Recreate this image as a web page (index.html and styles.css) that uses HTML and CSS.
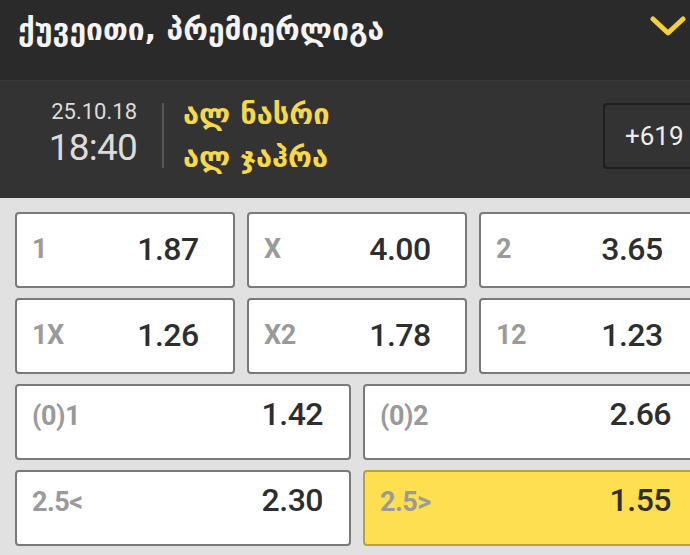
FILE: index.html
```html
<!DOCTYPE html>
<html lang="ka">
<head>
<meta charset="utf-8">
<title>ქუვეითი, პრემიერლიგა</title>
<link rel="stylesheet" href="styles.css">
</head>
<body>
<div class="page">
  <header class="header">
    <h1 class="title">ქუვეითი, პრემიერლიგა</h1>
    <svg class="chevron" width="36" height="22" viewBox="0 0 36 22" aria-hidden="true">
      <polyline points="3,3 18,17 33,3" fill="none" stroke="#f4d03c" stroke-width="5" stroke-linecap="round" stroke-linejoin="round"/>
    </svg>
  </header>

  <section class="match">
    <div class="when">
      <div class="date">25.10.18</div>
      <div class="time">18:40</div>
    </div>
    <div class="divider"></div>
    <div class="teams">
      <div class="team">ალ ნასრი</div>
      <div class="team">ალ ჯაჰრა</div>
    </div>
    <div class="more">+619</div>
  </section>

  <section class="odds">
    <div class="grid grid3">
      <div class="cell"><span class="label">1</span><span class="value">1.87</span></div>
      <div class="cell"><span class="label">X</span><span class="value">4.00</span></div>
      <div class="cell"><span class="label">2</span><span class="value">3.65</span></div>
      <div class="cell"><span class="label">1X</span><span class="value">1.26</span></div>
      <div class="cell"><span class="label">X2</span><span class="value">1.78</span></div>
      <div class="cell"><span class="label">12</span><span class="value">1.23</span></div>
    </div>
    <div class="grid grid2">
      <div class="cell"><span class="label">(0)1</span><span class="value">1.42</span></div>
      <div class="cell"><span class="label">(0)2</span><span class="value">2.66</span></div>
      <div class="cell"><span class="label">2.5&lt;</span><span class="value">2.30</span></div>
      <div class="cell selected"><span class="label">2.5&gt;</span><span class="value">1.55</span></div>
    </div>
  </section>
</div>
</body>
</html>
```

FILE: styles.css
```css
html, body {
  margin: 0;
  padding: 0;
  background: #e1e1e1;
}

.page {
  width: 690px;
  height: 555px;
  overflow: hidden;
  font-family: Roboto, "DejaVu Sans", sans-serif;
}

.header {
  box-sizing: border-box;
  height: 81px;
  background: #2a2a2a;
  border-bottom: 1px solid #3a3a3a;
  display: flex;
  align-items: flex-start;
  justify-content: space-between;
  padding: 0 4px 0 18px;
}

.title {
  margin: 0;
  padding-top: 10px;
  font-family: "DejaVu Sans", sans-serif;
  font-weight: bold;
  font-size: 30px;
  line-height: 40px;
  color: #f4f4f4;
  letter-spacing: 0;
}

.chevron {
  margin-top: 16px;
}

.match {
  box-sizing: border-box;
  height: 117px;
  background: #333333;
  display: flex;
  align-items: flex-start;
}

.when {
  width: 137px;
  padding-top: 20px;
  text-align: right;
  color: #dcdcdc;
}

.date {
  font-size: 22px;
  line-height: 22px;
  letter-spacing: 0;
}

.time {
  margin-top: 6px;
  font-size: 37px;
  line-height: 37px;
  letter-spacing: -0.8px;
}

.divider {
  width: 2px;
  height: 65px;
  margin: 22px 0 0 25px;
  background: #575757;
}

.teams {
  flex: 1;
  padding: 12px 0 0 19px;
  font-family: "DejaVu Sans", sans-serif;
  font-weight: bold;
  font-size: 29px;
  line-height: 43px;
  color: #f6d84b;
}

.more {
  box-sizing: border-box;
  width: 100px;
  height: 66px;
  margin: 22px -13px 0 0;
  border: 2px solid #1e1e1e;
  border-radius: 4px;
  display: flex;
  align-items: center;
  padding-left: 20px;
  font-size: 26px;
  color: #ececec;
}

.odds {
  box-sizing: border-box;
  width: 714px;
  padding: 14px 0 0 15px;
  display: flex;
  flex-direction: column;
  gap: 10px;
}

.grid {
  display: grid;
  gap: 10px 12px;
}

.grid3 {
  grid-template-columns: repeat(3, 220px);
}

.grid2 {
  grid-template-columns: repeat(2, 336px);
}

.cell {
  box-sizing: border-box;
  height: 76px;
  background: #ffffff;
  border: 2px solid #7a7a7a;
  border-radius: 4px;
  display: flex;
}

.label {
  flex: 1;
  font-weight: bold;
  font-size: 27px;
  color: #9a9a9a;
  letter-spacing: -0.5px;
}

.value {
  font-size: 32px;
  font-weight: 500;
  color: #2e2e2e;
  letter-spacing: -0.5px;
}

.grid3 .cell {
  align-items: center;
  padding: 0 20px 3px 15px;
}

.grid3 .value {
  width: 90px;
  text-align: center;
}

.grid2 .cell {
  align-items: baseline;
  padding: 12px 26px 0 15px;
  line-height: 32px;
}

.cell.selected {
  background: #fddf4f;
  border-color: #b9a23c;
}
```
